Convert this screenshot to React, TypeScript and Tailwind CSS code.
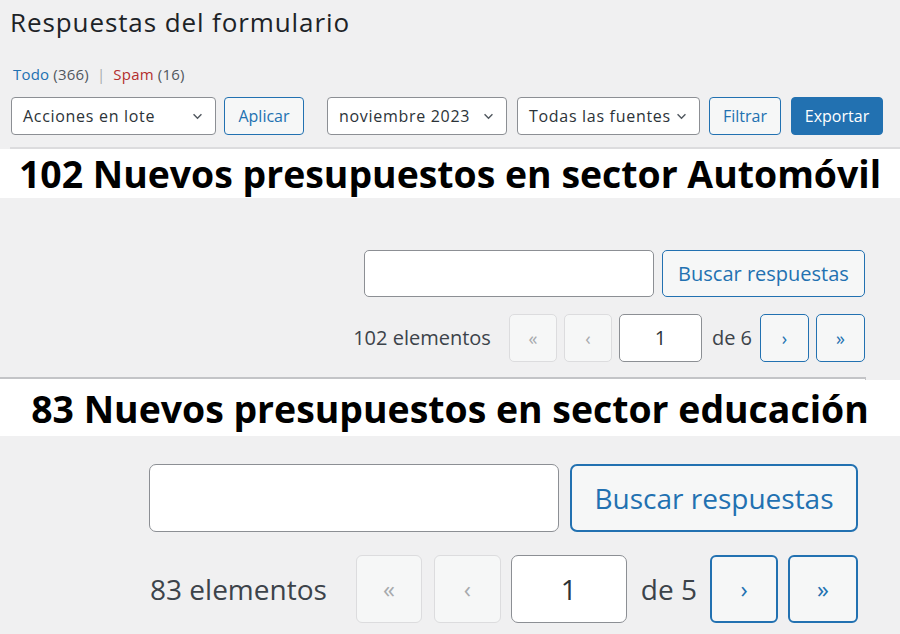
import React from "react";

const ui = "font-['Open_Sans','Noto_Sans',sans-serif]";

function Chevron({ className = "" }: { className?: string }) {
  return (
    <svg viewBox="0 0 12 8" className={className} fill="none" stroke="currentColor" strokeWidth="1.6">
      <path d="M1.5 1.5 6 6l4.5-4.5" />
    </svg>
  );
}

function FakeSelect({ label, width }: { label: string; width: string }) {
  return (
    <div
      className={`${width} h-[38px] flex items-center justify-between pl-[11px] pr-[12px] bg-white border border-[#8c8f94] rounded-[4px] text-[16px] tracking-[0.7px] text-[#2c3338]`}
    >
      <span className="whitespace-nowrap">{label}</span>
      <Chevron className="w-[11px] h-[7px] text-[#50575e]" />
    </div>
  );
}

function SecondaryButton({ label, width }: { label: string; width: string }) {
  return (
    <button
      className={`${width} h-[38px] flex items-center justify-center bg-[#f6f7f7] border border-[#2271b1] rounded-[4px] text-[16px] text-[#2271b1]`}
    >
      {label}
    </button>
  );
}

function Heading({ text, tall }: { text: string; tall?: boolean }) {
  return (
    <div
      className={`bg-white flex items-center justify-center ${tall ? "h-[56px] pt-[2px]" : "h-[49px]"}`}
    >
      <h2 className="font-['Open_Sans',sans-serif] font-bold text-[37.4px] leading-none text-black whitespace-nowrap">
        {text}
      </h2>
    </div>
  );
}

export default function App() {
  return (
    <div className={`w-[900px] h-[634px] overflow-hidden bg-[#f0f0f1] ${ui}`}>
      {/* wp header */}
      <div className="h-[147px] pl-[10px] pt-[4px]">
        <h1 className="text-[26px] leading-[36px] tracking-[0.9px] text-[#1d2327]">Respuestas del formulario</h1>
        <div className="mt-[24px] ml-[3px] h-[20px] flex items-center text-[15px] tracking-[0.2px] text-[#50575e]">
          <span className="text-[#2271b1]">Todo</span>
          <span className="ml-[4px]">(366)</span>
          <span className="mx-[8px] text-[#a7aaad]">|</span>
          <span className="text-[#b32d2e]">Spam</span>
          <span className="ml-[4px]">(16)</span>
        </div>
        <div className="mt-[13px] ml-[1px] flex items-center">
          <FakeSelect label="Acciones en lote" width="w-[205px]" />
          <SecondaryButton label="Aplicar" width="w-[80px] ml-[8px]" />
          <FakeSelect label="noviembre 2023" width="w-[180px] ml-[23px]" />
          <div className="ml-[10px]">
            <FakeSelect label="Todas las fuentes" width="w-[183px]" />
          </div>
          <SecondaryButton label="Filtrar" width="w-[72px] ml-[9px]" />
          <button className="ml-[10px] w-[92px] h-[38px] bg-[#2271b1] border border-[#2271b1] rounded-[4px] text-[16px] text-white">
            Exportar
          </button>
        </div>
      </div>
      <div className="ml-[10px] h-[2px] bg-[#dcdcde]" />

      <Heading text="102 Nuevos presupuestos en sector Automóvil" />

      {/* section 1 */}
      <div className="h-[179px] pr-[35px] pt-[52px] flex flex-col items-end">
        <div className="flex gap-[8px]">
          <div className="w-[290px] h-[47px] bg-white border border-[#8c8f94] rounded-[5px]" />
          <button className="w-[203px] h-[47px] bg-[#f6f7f7] border-[1.5px] border-[#2271b1] rounded-[5px] text-[20px] text-[#2271b1]">
            Buscar respuestas
          </button>
        </div>
        <div className="mt-[17px] flex items-center h-[48px] text-[20px] text-[#3c434a]">
          <span className="mr-[18px]">102 elementos</span>
          <span className="w-[48px] h-[48px] flex items-center justify-center bg-[#f6f7f7] border border-[#dcdcde] rounded-[5px] text-[#a7aaad] text-[18px]">«</span>
          <span className="ml-[7px] w-[48px] h-[48px] flex items-center justify-center bg-[#f6f7f7] border border-[#dcdcde] rounded-[5px] text-[#a7aaad] text-[18px]">‹</span>
          <span className="ml-[7px] w-[83px] h-[48px] flex items-center justify-center bg-white border border-[#8c8f94] rounded-[5px] text-[#2c3338]">1</span>
          <span className="ml-[10px]">de 6</span>
          <span className="ml-[8px] w-[49px] h-[48px] flex items-center justify-center bg-[#f6f7f7] border-[1.5px] border-[#2271b1] rounded-[5px] text-[#2271b1] text-[18px]">›</span>
          <span className="ml-[7px] w-[49px] h-[48px] flex items-center justify-center bg-[#f6f7f7] border-[1.5px] border-[#2271b1] rounded-[5px] text-[#2271b1] text-[18px]">»</span>
        </div>
      </div>
      <div className="w-[866px] h-[3px] bg-white border-t-[2px] border-r border-[#c3c4c7]" />

      <Heading text="83 Nuevos presupuestos en sector educación" tall />

      {/* section 2 */}
      <div className="pr-[42px] pt-[28px] flex flex-col items-end">
        <div className="flex gap-[11px]">
          <div className="w-[410px] h-[68px] bg-white border-[1.5px] border-[#8c8f94] rounded-[7px]" />
          <button className="w-[288px] h-[68px] bg-[#f6f7f7] border-[2px] border-[#2271b1] rounded-[7px] text-[28px] text-[#2271b1]">
            Buscar respuestas
          </button>
        </div>
        <div className="mt-[23px] flex items-center h-[68px] text-[28px] text-[#3c434a]">
          <span className="mr-[29px]">83 elementos</span>
          <span className="w-[66px] h-[68px] flex items-center justify-center bg-[#f6f7f7] border border-[#dcdcde] rounded-[6px] text-[#a7aaad] text-[24px]">«</span>
          <span className="ml-[12px] w-[67px] h-[68px] flex items-center justify-center bg-[#f6f7f7] border border-[#dcdcde] rounded-[6px] text-[#a7aaad] text-[24px]">‹</span>
          <span className="ml-[10px] w-[116px] h-[68px] flex items-center justify-center bg-white border-[1.5px] border-[#8c8f94] rounded-[7px] text-[#2c3338]">1</span>
          <span className="ml-[14px]">de 5</span>
          <span className="ml-[13px] w-[68px] h-[68px] flex items-center justify-center bg-[#f6f7f7] border-[2px] border-[#2271b1] rounded-[6px] text-[#2271b1] text-[24px]">›</span>
          <span className="ml-[10px] w-[70px] h-[68px] flex items-center justify-center bg-[#f6f7f7] border-[2px] border-[#2271b1] rounded-[6px] text-[#2271b1] text-[24px]">»</span>
        </div>
      </div>
    </div>
  );
}
